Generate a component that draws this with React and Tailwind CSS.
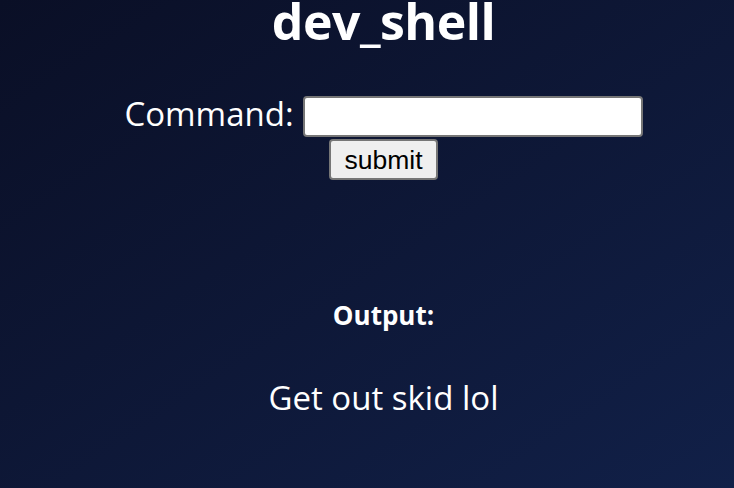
export default function App() {
  return (
    <div className="h-[488px] w-full overflow-hidden bg-linear-to-br from-[#0a0f26] to-[#112048] font-['Open_Sans','Noto_Sans',sans-serif] text-white">
      <div className="pl-[33px] text-center">
        <h1 className="-mt-[11px] text-[50px] font-bold leading-[64px] tracking-[-0.5px]">dev_shell</h1>

        <form className="mt-[43px]" onSubmit={(e) => e.preventDefault()}>
          <div className="flex h-[41px] items-center justify-center gap-[9px]">
            <label className="mb-[6px] text-[33px] leading-[44px]">Command:</label>
            <input
              type="text"
              className="h-[41px] w-[340px] rounded-[4px] border-2 border-[#767676] bg-white px-2 text-black"
            />
          </div>
          <button
            type="submit"
            className="mt-[2px] h-[41px] w-[109px] rounded-[4px] border-2 border-[#767676] bg-[#efefef] font-['Liberation_Sans',Arial,sans-serif] text-[26.5px] leading-[36px] text-black"
          >
            submit
          </button>
        </form>

        <h4 className="mt-[117px] text-[26px] font-bold leading-[36px]">Output:</h4>
        <p className="mt-[43px] text-[33px] leading-[44px]">Get out skid lol</p>
      </div>
    </div>
  );
}
